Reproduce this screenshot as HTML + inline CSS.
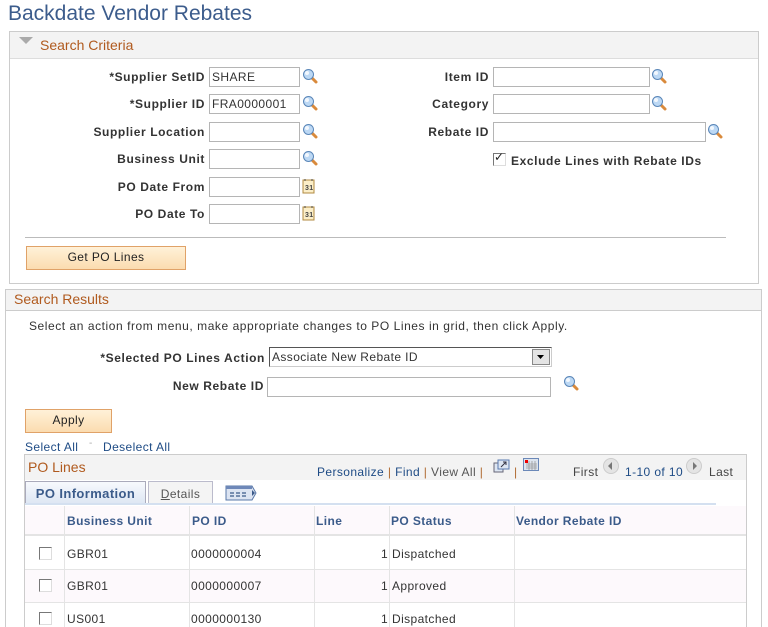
<!DOCTYPE html>
<html><head><meta charset="utf-8"><style>
*{box-sizing:border-box;margin:0;padding:0}
html,body{width:768px;height:627px;overflow:hidden}
body{background:#fff;font-family:"Liberation Sans",Arial,sans-serif;font-size:12px;color:#333;position:relative;letter-spacing:0.4px}
.a{position:absolute;white-space:nowrap}
.lb{position:absolute;font-weight:bold;color:#333;text-align:right;white-space:nowrap;line-height:20px;letter-spacing:0.6px}
.in{position:absolute;height:20px;border:1px solid #b5b5b5;background:#fff;padding-left:2px;line-height:18px;font-size:12px;color:#333}
.ic{position:absolute;width:17px;height:17px}
.lnk{color:#1e4b85}
.btn{position:absolute;border:1px solid #e0a268;background:linear-gradient(#fff1d8,#fbdcb0);text-align:center;font-size:12px;color:#222;line-height:21px}
.cb{position:absolute;width:13px;height:13px;border:1px solid #777;border-right-color:#ddd;border-bottom-color:#ddd;background:#fff}
.th{position:absolute;font-weight:bold;color:#3b5b8a;line-height:30px;top:506px}
.td{position:absolute;line-height:32px}
</style></head><body>
<div class="a" style="left:8px;top:2px;font-size:21px;color:#3c5c8c;letter-spacing:0">Backdate Vendor Rebates</div>

<div class="a" style="left:9px;top:31px;width:750px;height:253px;border:1px solid #ccc"></div>
<div class="a" style="left:10px;top:32px;width:748px;height:27px;background:#f3f3f3;border-bottom:1px solid #ddd"></div>
<svg class="a" style="left:19px;top:37px" width="14" height="8"><polygon points="0,0 14,0 7,7" fill="#aaa"/></svg>
<div class="a" style="left:40px;top:37px;font-size:14px;color:#b05a1e;letter-spacing:0">Search Criteria</div>

<div class="lb" style="right:563px;top:67px">*Supplier SetID</div><div class="in" style="left:209px;top:67px;width:91px">SHARE</div>
<div class="lb" style="right:563px;top:94px">*Supplier ID</div><div class="in" style="left:209px;top:94px;width:91px">FRA0000001</div>
<div class="lb" style="right:563px;top:122px">Supplier Location</div><div class="in" style="left:209px;top:122px;width:91px"></div>
<div class="lb" style="right:563px;top:149px">Business Unit</div><div class="in" style="left:209px;top:149px;width:91px"></div>
<div class="lb" style="right:563px;top:177px">PO Date From</div><div class="in" style="left:209px;top:177px;width:91px"></div>
<div class="lb" style="right:563px;top:204px">PO Date To</div><div class="in" style="left:209px;top:204px;width:91px"></div>

<div class="lb" style="right:279px;top:67px">Item ID</div><div class="in" style="left:493px;top:67px;width:157px"></div>
<div class="lb" style="right:279px;top:94px">Category</div><div class="in" style="left:493px;top:94px;width:157px"></div>
<div class="lb" style="right:279px;top:122px">Rebate ID</div><div class="in" style="left:493px;top:122px;width:213px"></div>
<div class="cb" style="left:493px;top:153px"></div>
<div class="a" style="left:494px;top:150px;font-size:12px;color:#222">✓</div>
<div class="a" style="left:511px;top:154px;font-weight:bold;color:#333;letter-spacing:0.6px">Exclude Lines with Rebate IDs</div>

<svg width="0" height="0" style="position:absolute"><defs>
<g id="lk"><line x1="9" y1="9" x2="14" y2="14" stroke="#d98a3c" stroke-width="3" stroke-linecap="round"/><circle cx="6.5" cy="6.5" r="5" fill="#bcd8f4" stroke="#5a86b8"/><circle cx="5" cy="5" r="2" fill="#fff" opacity=".8"/></g>
<g id="cal"><rect x="1" y="2" width="11" height="13" fill="#fbeec8" stroke="#b08a40"/><line x1="3" y1="1" x2="3" y2="3" stroke="#555"/><line x1="10" y1="1" x2="10" y2="3" stroke="#555"/><text x="3" y="12" font-size="7" font-family="Liberation Sans" font-weight="bold" fill="#444">31</text></g>
</defs></svg>
<svg class="ic" style="left:302px;top:68px"><use href="#lk"/></svg>
<svg class="ic" style="left:302px;top:95px"><use href="#lk"/></svg>
<svg class="ic" style="left:302px;top:123px"><use href="#lk"/></svg>
<svg class="ic" style="left:302px;top:150px"><use href="#lk"/></svg>
<svg class="ic" style="left:302px;top:178px"><use href="#cal"/></svg>
<svg class="ic" style="left:302px;top:205px"><use href="#cal"/></svg>
<svg class="ic" style="left:651px;top:68px"><use href="#lk"/></svg>
<svg class="ic" style="left:651px;top:95px"><use href="#lk"/></svg>
<svg class="ic" style="left:707px;top:123px"><use href="#lk"/></svg>

<div class="a" style="left:25px;top:237px;width:701px;border-top:1px solid #bbb"></div>
<div class="btn" style="left:26px;top:246px;width:160px;height:24px">Get PO Lines</div>

<div class="a" style="left:5px;top:289px;width:757px;height:345px;border:1px solid #ccc"></div>
<div class="a" style="left:6px;top:290px;width:755px;height:21px;background:#f3f3f3;border-bottom:1px solid #ccc"></div>
<div class="a" style="left:14px;top:291px;font-size:14px;color:#b05a1e;letter-spacing:0">Search Results</div>
<div class="a" style="left:29px;top:319px;color:#333;letter-spacing:0.55px">Select an action from menu, make appropriate changes to PO Lines in grid, then click Apply.</div>

<div class="lb" style="right:503px;top:348px">*Selected PO Lines Action</div>
<div class="in" style="left:269px;top:347px;width:283px;border-color:#555 #ccc #ccc #555">Associate New Rebate ID</div>
<div class="a" style="left:532px;top:349px;width:18px;height:16px;background:#e4e4e4;border:1px solid #888"></div>
<svg class="a" style="left:537px;top:355px" width="8" height="5"><polygon points="0,0 7,0 3.5,4" fill="#000"/></svg>
<div class="lb" style="right:504px;top:376px">New Rebate ID</div>
<div class="in" style="left:267px;top:377px;width:284px"></div>
<svg class="ic" style="left:563px;top:375px"><use href="#lk"/></svg>
<div class="btn" style="left:25px;top:409px;width:87px;height:24px">Apply</div>

<div class="a lnk" style="left:25px;top:440px">Select All</div>
<div class="a" style="left:89px;top:438px;color:#aaa;font-size:10px">-</div>
<div class="a lnk" style="left:103px;top:440px">Deselect All</div>

<div class="a" style="left:24px;top:454px;width:723px;height:180px;border:1px solid #ccc"></div>
<div class="a" style="left:25px;top:455px;width:721px;height:25px;background:#f3f3f3"></div>
<div class="a" style="left:28px;top:459px;font-size:14px;color:#b05a1e;letter-spacing:0">PO Lines</div>
<div class="a" style="left:317px;top:465px;color:#555"><span class="lnk">Personalize</span> <span style="color:#b06a30">|</span> <span class="lnk">Find</span> <span style="color:#b06a30">|</span> View All <span style="color:#b06a30">|</span></div>
<svg class="a" style="left:493px;top:459px" width="18" height="15"><rect x="1" y="4" width="9" height="9" fill="#dde6f2" stroke="#667"/><rect x="5" y="1" width="11" height="9" fill="#dde6f2" stroke="#5a7bb0"/><path d="M8 8 L13 3 M10 3 H13 V6" stroke="#334" fill="none"/></svg>
<div class="a" style="left:514px;top:465px;color:#b06a30">|</div>
<svg class="a" style="left:523px;top:458px" width="17" height="14"><rect x=".5" y=".5" width="15" height="12" fill="#dde4ee" stroke="#6b88b8"/><rect x="2" y="2" width="3" height="3" fill="#e00"/><path d="M3 6H14M3 8H14M3 10H14M6 3V12M9 3V12M12 3V12" stroke="#999" stroke-width=".8"/></svg>
<div class="a" style="left:573px;top:465px;color:#444">First</div>
<svg class="a" style="left:603px;top:458px" width="16" height="16"><circle cx="8" cy="8" r="7.5" fill="#e4e4e4" stroke="#ccc"/><polygon points="9,4 5,8 9,12" fill="#777"/></svg>
<div class="a lnk" style="left:625px;top:465px">1-10 of 10</div>
<svg class="a" style="left:686px;top:458px" width="16" height="16"><circle cx="8" cy="8" r="7.5" fill="#e4e4e4" stroke="#ccc"/><polygon points="7,4 11,8 7,12" fill="#777"/></svg>
<div class="a" style="left:709px;top:465px;color:#444">Last</div>

<div class="a" style="left:25px;top:481px;width:121px;height:23px;background:linear-gradient(#f7f9fd,#dde6f3);border:1px solid #aab;border-bottom:none;font-weight:bold;color:#3b5b8a;text-align:center;line-height:24px;font-size:13px">PO Information</div>
<div class="a" style="left:148px;top:481px;width:65px;height:23px;background:#f4f4f4;border:1px solid #bbc;border-bottom:none;color:#555;text-align:center;line-height:24px;font-size:12px"><u>D</u>etails</div>
<svg class="a" style="left:225px;top:485px" width="32" height="16"><path d="M1 1H27L31 8L27 15H1Z" fill="#dce4f2" stroke="#5a78a8"/><rect x="1" y="1" width="26" height="3" fill="#6e88b8"/><path d="M5 8H9M11 8H15M17 8H21M5 11H9M11 11H15M17 11H21" stroke="#3b5b8a" stroke-width="1.2"/><polygon points="27,5 30,8 27,11" fill="#3b5b8a"/></svg>
<div class="a" style="left:25px;top:503px;width:691px;height:2px;background:#d4e0f0"></div>

<div class="a" style="left:25px;top:506px;width:721px;height:30px;background:#fdf9fc;border-bottom:2px solid #e4e4e4"></div>
<div class="a" style="left:25px;top:570px;width:721px;height:32px;background:#fdf9fc"></div>
<div class="a" style="left:25px;top:569px;width:721px;border-top:1px solid #e4e4e4"></div>
<div class="a" style="left:25px;top:602px;width:721px;border-top:1px solid #e4e4e4"></div>
<div class="a" style="left:64px;top:506px;height:121px;border-left:1px solid #e4e4e4"></div>
<div class="a" style="left:189px;top:506px;height:121px;border-left:1px solid #e4e4e4"></div>
<div class="a" style="left:314px;top:506px;height:121px;border-left:1px solid #e4e4e4"></div>
<div class="a" style="left:389px;top:506px;height:121px;border-left:1px solid #e4e4e4"></div>
<div class="a" style="left:514px;top:506px;height:121px;border-left:1px solid #e4e4e4"></div>

<div class="th" style="left:67px">Business Unit</div>
<div class="th" style="left:192px">PO ID</div>
<div class="th" style="left:316px">Line</div>
<div class="th" style="left:391px">PO Status</div>
<div class="th" style="left:516px">Vendor Rebate ID</div>

<div class="cb" style="left:39px;top:547px"></div>
<div class="td" style="left:67px;top:538px">GBR01</div><div class="td" style="left:191px;top:538px">0000000004</div><div class="td" style="left:381px;top:538px">1</div><div class="td" style="left:392px;top:538px">Dispatched</div>
<div class="cb" style="left:39px;top:579px"></div>
<div class="td" style="left:67px;top:570px">GBR01</div><div class="td" style="left:191px;top:570px">0000000007</div><div class="td" style="left:381px;top:570px">1</div><div class="td" style="left:392px;top:570px">Approved</div>
<div class="cb" style="left:39px;top:612px"></div>
<div class="td" style="left:67px;top:603px">US001</div><div class="td" style="left:191px;top:603px">0000000130</div><div class="td" style="left:381px;top:603px">1</div><div class="td" style="left:392px;top:603px">Dispatched</div>
</body></html>
